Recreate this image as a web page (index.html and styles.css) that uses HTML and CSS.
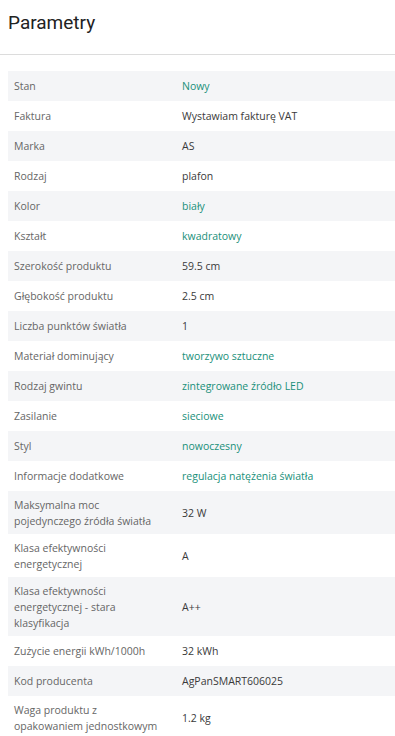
FILE: index.html
```html
<!DOCTYPE html>
<html lang="pl">
<head>
<meta charset="utf-8">
<link rel="stylesheet" href="styles.css">
</head>
<body>
<header class="head"><h1 class="title">Parametry</h1></header>
<div class="params">
  <div class="row"><div class="label">Stan</div><div class="value link">Nowy</div></div>
  <div class="row"><div class="label">Faktura</div><div class="value">Wystawiam fakturę VAT</div></div>
  <div class="row"><div class="label">Marka</div><div class="value">AS</div></div>
  <div class="row"><div class="label">Rodzaj</div><div class="value">plafon</div></div>
  <div class="row"><div class="label">Kolor</div><div class="value link">biały</div></div>
  <div class="row"><div class="label">Kształt</div><div class="value link">kwadratowy</div></div>
  <div class="row"><div class="label">Szerokość produktu</div><div class="value">59.5 cm</div></div>
  <div class="row"><div class="label">Głębokość produktu</div><div class="value">2.5 cm</div></div>
  <div class="row"><div class="label">Liczba punktów światła</div><div class="value">1</div></div>
  <div class="row"><div class="label">Materiał dominujący</div><div class="value link">tworzywo sztuczne</div></div>
  <div class="row"><div class="label">Rodzaj gwintu</div><div class="value link">zintegrowane źródło LED</div></div>
  <div class="row"><div class="label">Zasilanie</div><div class="value link">sieciowe</div></div>
  <div class="row"><div class="label">Styl</div><div class="value link">nowoczesny</div></div>
  <div class="row"><div class="label">Informacje dodatkowe</div><div class="value link">regulacja natężenia światła</div></div>
  <div class="row"><div class="label">Maksymalna moc pojedynczego źródła światła</div><div class="value">32 W</div></div>
  <div class="row"><div class="label">Klasa efektywności energetycznej</div><div class="value">A</div></div>
  <div class="row"><div class="label">Klasa efektywności energetycznej - stara klasyfikacja</div><div class="value">A++</div></div>
  <div class="row"><div class="label">Zużycie energii kWh/1000h</div><div class="value">32 kWh</div></div>
  <div class="row"><div class="label">Kod producenta</div><div class="value">AgPanSMART606025</div></div>
  <div class="row"><div class="label">Waga produktu z opakowaniem jednostkowym</div><div class="value">1.2 kg</div></div>
</div>
</body>
</html>
```

FILE: styles.css
```css
html, body {
  margin: 0;
  padding: 0;
  background: #fff;
}
body {
  font-family: "Open Sans", "Liberation Sans", sans-serif;
}
.head {
  padding: 12px 8px 20px;
  border-bottom: 1px solid #dcdcdc;
}
.title {
  margin: 0;
  font-family: Roboto, "Liberation Sans", sans-serif;
  font-weight: 400;
  font-size: 19px;
  line-height: 22px;
  color: #222;
}
.params {
  margin: 16px 0 0 8px;
}
.row {
  display: flex;
  align-items: center;
  min-height: 30px;
  box-sizing: border-box;
  padding: 5.5px 6px;
  font-size: 10.5px;
  line-height: 16px;
}
.row:nth-child(odd) {
  background: #f4f5f7;
}
.label {
  flex: 0 0 168px;
  width: 168px;
  padding-right: 20px;
  box-sizing: border-box;
  color: #666;
}
.value {
  flex: 1;
  color: #3a3a3a;
}
.value.link {
  color: #1a907a;
}
```
